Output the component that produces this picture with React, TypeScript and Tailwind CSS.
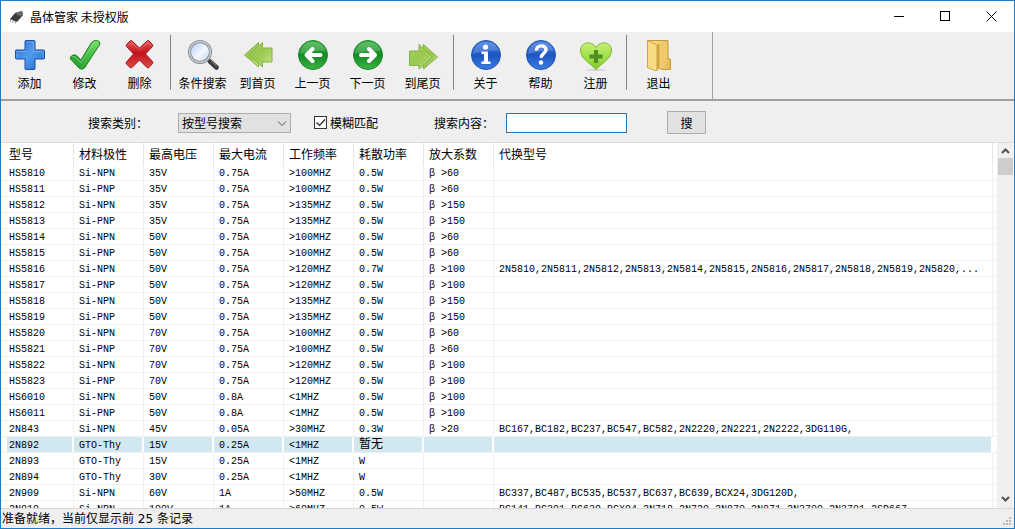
import { useState } from 'react'
import type { ReactNode } from 'react'
import clsx from 'clsx'

const columns = ['型号', '材料极性', '最高电压', '最大电流', '工作频率', '耗散功率', '放大系数', '代换型号']

const rows = [
  ['HS5810', 'Si-NPN', '35V', '0.75A', '>100MHZ', '0.5W', 'β >60', ''],
  ['HS5811', 'Si-PNP', '35V', '0.75A', '>100MHZ', '0.5W', 'β >60', ''],
  ['HS5812', 'Si-NPN', '35V', '0.75A', '>135MHZ', '0.5W', 'β >150', ''],
  ['HS5813', 'Si-PNP', '35V', '0.75A', '>135MHZ', '0.5W', 'β >150', ''],
  ['HS5814', 'Si-NPN', '50V', '0.75A', '>100MHZ', '0.5W', 'β >60', ''],
  ['HS5815', 'Si-PNP', '50V', '0.75A', '>100MHZ', '0.5W', 'β >60', ''],
  ['HS5816', 'Si-NPN', '50V', '0.75A', '>120MHZ', '0.7W', 'β >100', '2N5810,2N5811,2N5812,2N5813,2N5814,2N5815,2N5816,2N5817,2N5818,2N5819,2N5820,...'],
  ['HS5817', 'Si-PNP', '50V', '0.75A', '>120MHZ', '0.5W', 'β >100', ''],
  ['HS5818', 'Si-NPN', '50V', '0.75A', '>135MHZ', '0.5W', 'β >150', ''],
  ['HS5819', 'Si-PNP', '50V', '0.75A', '>135MHZ', '0.5W', 'β >150', ''],
  ['HS5820', 'Si-NPN', '70V', '0.75A', '>100MHZ', '0.5W', 'β >60', ''],
  ['HS5821', 'Si-PNP', '70V', '0.75A', '>100MHZ', '0.5W', 'β >60', ''],
  ['HS5822', 'Si-NPN', '70V', '0.75A', '>120MHZ', '0.5W', 'β >100', ''],
  ['HS5823', 'Si-PNP', '70V', '0.75A', '>120MHZ', '0.5W', 'β >100', ''],
  ['HS6010', 'Si-NPN', '50V', '0.8A', '<1MHZ', '0.5W', 'β >100', ''],
  ['HS6011', 'Si-PNP', '50V', '0.8A', '<1MHZ', '0.5W', 'β >100', ''],
  ['2N843', 'Si-NPN', '45V', '0.05A', '>30MHZ', '0.3W', 'β >20', 'BC167,BC182,BC237,BC547,BC582,2N2220,2N2221,2N2222,3DG110G,'],
  ['2N892', 'GTO-Thy', '15V', '0.25A', '<1MHZ', '暂无', '', ''],
  ['2N893', 'GTO-Thy', '15V', '0.25A', '<1MHZ', 'W', '', ''],
  ['2N894', 'GTO-Thy', '30V', '0.25A', '<1MHZ', 'W', '', ''],
  ['2N909', 'Si-NPN', '60V', '1A', '>50MHZ', '0.5W', '', 'BC337,BC487,BC535,BC537,BC637,BC639,BCX24,3DG120D,'],
  ['2N910', 'Si-NPN', '100V', '1A', '>60MHZ', '0.5W', '', 'BC141,BC301,BC639,BCX94,2N718,2N720,2N870,2N871,2N3700,2N3701,2SD667'],
]

function Icon({ children }: { children: ReactNode }) {
  return (
    <svg width="32" height="32" viewBox="0 0 32 32" aria-hidden="true">
      {children}
    </svg>
  )
}

const addIcon = (
  <Icon>
    <defs>
      <linearGradient id="addFill" x1="0" y1="0" x2="1" y2="1">
        <stop offset="0" stopColor="#2f6fd0" />
        <stop offset="0.5" stopColor="#4f9bee" />
        <stop offset="1" stopColor="#2163c9" />
      </linearGradient>
    </defs>
    <path d="M12 1.500h8q1 0 1 1V11h8.500q1 0 1 1v7q0 1-1 1H21v9.500q0 1-1 1h-8q-1 0-1-1V20H2.500q-1 0-1-1v-7q0-1 1-1H11V2.500q0-1 1-1z" fill="url(#addFill)" stroke="#1d4fa5" />
    <path d="M12.500 3h7v9.500h9.500v6" fill="none" stroke="#8fc0f7" opacity="0.5" />
    <path d="M3 18.500v-6h9.500" fill="none" stroke="#8fc0f7" opacity="0.5" />
  </Icon>
)

const editIcon = (
  <Icon>
    <defs>
      <linearGradient id="editFill" x1="1" y1="0" x2="0" y2="1">
        <stop offset="0" stopColor="#7ee06d" />
        <stop offset="0.5" stopColor="#3fb93f" />
        <stop offset="1" stopColor="#23962b" />
      </linearGradient>
    </defs>
    <path d="M27.500 1.500q3.500 0 3.500 3.500L15.500 29q-3 2.500-5.500 0L1.500 20q-.8-2 1.500-3.500 3-1.500 5 .5l4 4L22.500 3.500q2-2 5-2z" fill="url(#editFill)" stroke="#1b7d25" />
    <path d="M3 18q2.500-1 4 .5l5 5L25 3.800q1.500-1.300 4-.8" fill="none" stroke="#a9ee9a" opacity="0.5" />
  </Icon>
)

const deleteIcon = (
  <Icon>
    <defs>
      <linearGradient id="deleteFill" x1="0" y1="0" x2="0" y2="1">
        <stop offset="0" stopColor="#ea5f58" />
        <stop offset="0.45" stopColor="#c0121c" />
        <stop offset="1" stopColor="#dd4a48" />
      </linearGradient>
    </defs>
    <path d="M8 2l7.500 7L23 2q1-.8 2 0l3.500 3.500q.8 1 0 2L21.500 15l7 7.500q.8 1 0 2L25 28.500q-1 .8-2 0L15.500 21 8 28.500q-1 .8-2 0L2.500 25q-.8-1 0-2l7-8-7-7.500q-.8-1 0-2L6 2q1-.8 2 0z" fill="url(#deleteFill)" stroke="#a8141c" />
    <path d="M4 6.500L7 3.500l8.500 7.500L24 3.500l3 3" fill="none" stroke="#f9a6a0" opacity="0.35" />
  </Icon>
)

const searchIcon = (
  <Icon>
    <defs>
      <linearGradient id="lensFill" x1="0" y1="0" x2="1" y2="1">
        <stop offset="0" stopColor="#a9c6f3" />
        <stop offset="0.55" stopColor="#f4f8ff" />
        <stop offset="1" stopColor="#b7cff5" />
      </linearGradient>
    </defs>
    <path d="M20 20l2.500 2.500" stroke="#8b8b8b" strokeWidth="3" />
    <path d="M23 22.500l6.500 6" stroke="#3c3c3c" strokeWidth="4.500" strokeLinecap="round" />
    <path d="M23.500 21.500l6 5.500" stroke="#8d8d8d" strokeWidth="1" />
    <circle cx="13" cy="13" r="10.500" fill="url(#lensFill)" stroke="#7e8288" strokeWidth="3" />
    <circle cx="13" cy="13" r="10.500" fill="none" stroke="#c9ccd2" strokeWidth="1.500" />
  </Icon>
)

const arrowFill = (id: string) => (
  <defs>
    <linearGradient id={id} x1="0" y1="0" x2="1" y2="1">
      <stop offset="0" stopColor="#a3cc5e" />
      <stop offset="0.5" stopColor="#9aca50" />
      <stop offset="1" stopColor="#c5e48a" />
    </linearGradient>
  </defs>
)

const firstIcon = (
  <Icon>
    {arrowFill('firstFill')}
    <g fill="url(#firstFill)" stroke="#86b04a" strokeLinejoin="round">
      <path d="M16.500 3.500L2.500 16l14 12z" />
      <path d="M20.500 3.500V9h9.500v14h-9.500v5L7 16z" />
      <path d="M20 9L11 16l9 7" fill="none" opacity="0.4" />
    </g>
  </Icon>
)

const lastIcon = (
  <Icon>
    {arrowFill('lastFill')}
    <g fill="url(#lastFill)" stroke="#86b04a" strokeLinejoin="round">
      <path d="M16.500 5.500L30.500 18l-14 12z" />
      <path d="M12 5.500V12H2.500v14.500H12V30l13.500-12z" />
      <path d="M13 12l8 6-8 7" fill="none" opacity="0.4" />
    </g>
  </Icon>
)

function Ball({ id, light, mid, dark, children }: { id: string; light: string; mid: string; dark: string; children: ReactNode }) {
  return (
    <Icon>
      <defs>
        <linearGradient id={id} x1="0" y1="0" x2="0" y2="1">
          <stop offset="0" stopColor={light} />
          <stop offset="0.5" stopColor={mid} />
          <stop offset="1" stopColor={light} />
        </linearGradient>
      </defs>
      <circle cx="16" cy="16" r="14.500" fill={`url(#${id})`} stroke={dark} />
      <path d="M3 15C3.500 7 9 3 16 3s11.500 3 12.500 9C20 11 10 13 3 15z" fill="#fff" opacity="0.18" />
      {children}
    </Icon>
  )
}

const prevIcon = (
  <Ball id="prevFill" light="#3db445" mid="#138a24" dark="#1c8a2b">
    <path d="M23.500 16H10M15.500 10L9.500 16l6 6" fill="none" stroke="#fff" strokeWidth="4" strokeLinecap="round" strokeLinejoin="round" />
  </Ball>
)

const nextIcon = (
  <Ball id="nextFill" light="#3db445" mid="#138a24" dark="#1c8a2b">
    <path d="M9 16h13.500M17 10l6 6-6 6" fill="none" stroke="#fff" strokeWidth="4" strokeLinecap="round" strokeLinejoin="round" />
  </Ball>
)

const aboutIcon = (
  <Ball id="aboutFill" light="#3c7ce0" mid="#1d56c4" dark="#2455a8">
    <circle cx="15.500" cy="8" r="2.600" fill="#fff" />
    <path d="M11.500 12.500h6.500v10h2.500V25h-9v-2.500H14V15h-2.500z" fill="#fff" />
  </Ball>
)

const helpIcon = (
  <Ball id="helpFill" light="#3c7ce0" mid="#1d56c4" dark="#2455a8">
    <path d="M11.500 11.500c0-6 9.500-6 9.500-.8 0 3.800-4.800 3.600-4.800 8" fill="none" stroke="#fff" strokeWidth="3.400" />
    <circle cx="16" cy="23.500" r="2.200" fill="#fff" />
  </Ball>
)

const registerIcon = (
  <Icon>
    <defs>
      <linearGradient id="heartFill" x1="0" y1="0" x2="0" y2="1">
        <stop offset="0" stopColor="#c6ef74" />
        <stop offset="1" stopColor="#7fce23" />
      </linearGradient>
    </defs>
    <ellipse cx="16" cy="31" rx="10" ry="1" fill="#000" opacity="0.12" />
    <path d="M16 30.500C11 25 .5 19.500.5 11.500.5 2.500 12 1.500 16 8.500 20 1.500 31.500 2.500 31.500 11.500c0 8-10.500 13.500-15.500 19z" fill="url(#heartFill)" stroke="#79b52e" />
    <path d="M14 11h4v4.500h4.500v4H18V24h-4v-4.500H9.500v-4H14z" fill="#4f8f22" />
  </Icon>
)

const exitIcon = (
  <Icon>
    <defs>
      <linearGradient id="exitFill" x1="0" y1="0" x2="1" y2="0">
        <stop offset="0" stopColor="#fbe6a0" />
        <stop offset="1" stopColor="#e6bb50" />
      </linearGradient>
    </defs>
    <path d="M5 1.500h20V20h2.500v10.500H19L9 26z" fill="url(#exitFill)" stroke="#c39a3b" />
    <path d="M17 3.500h7v17l-5 3-2-1z" fill="#efcb6b" />
    <path d="M4.500 1.500L14 6v26.500l-9.500-4z" fill="#f8dc85" stroke="#c9a346" />
    <path d="M14 6l2.500-1.500V28L14 32z" fill="#d3a541" />
  </Icon>
)

const toolGroups = [
  [
    { label: '添加', icon: addIcon },
    { label: '修改', icon: editIcon },
    { label: '删除', icon: deleteIcon },
  ],
  [
    { label: '条件搜索', icon: searchIcon },
    { label: '到首页', icon: firstIcon },
    { label: '上一页', icon: prevIcon },
    { label: '下一页', icon: nextIcon },
    { label: '到尾页', icon: lastIcon },
  ],
  [
    { label: '关于', icon: aboutIcon },
    { label: '帮助', icon: helpIcon },
    { label: '注册', icon: registerIcon },
  ],
  [{ label: '退出', icon: exitIcon }],
]

function TitleBar() {
  return (
    <header className="flex h-[31px] shrink-0 items-center bg-white pl-2">
      <svg width="16" height="16" viewBox="0 0 16 16" aria-hidden="true">
        <path d="M1 10l5-6 7-2 1 4-6 7-3-1z" fill="#3d3d3d" />
        <path d="M6 4l7-2 1 4-4 1z" fill="#6b6b6b" />
        <path d="M2 10l-1 3M4.500 11l-1 3M7 12.500l-1 2" stroke="#9b9b9b" />
      </svg>
      <h1 className="ml-[5px] flex-1 text-xs">晶体管家 未授权版</h1>
      <button aria-label="最小化" className="flex h-full w-[46px] items-center justify-center">
        <svg width="11" height="11" viewBox="0 0 11 11"><path d="M0 5.500h10" stroke="#000" /></svg>
      </button>
      <button aria-label="最大化" className="flex h-full w-[46px] items-center justify-center">
        <svg width="11" height="11" viewBox="0 0 11 11"><rect x=".5" y=".5" width="9" height="9" fill="none" stroke="#000" /></svg>
      </button>
      <button aria-label="关闭" className="flex h-full w-[46px] items-center justify-center">
        <svg width="11" height="11" viewBox="0 0 11 11"><path d="M.5.5l10 10M10.500.5l-10 10" stroke="#000" /></svg>
      </button>
    </header>
  )
}

function Toolbar() {
  return (
    <div className="flex shrink-0 border-b-2 border-[#a0a0a0]">
      <div className="flex border-r border-[#a0a0a0] pt-[3px] pr-[26px] pb-2 pl-px">
        {toolGroups.map((group, i) => (
          <div key={i} className="flex">
            {i > 0 && <div className="mr-1 ml-[3px] h-[55px] w-px bg-[#868686]" />}
            {group.map((tool) => (
              <button key={tool.label} className="flex w-[55px] flex-col items-center pt-1">
                {tool.icon}
                <span className="mt-1 text-xs leading-4 whitespace-nowrap">{tool.label}</span>
              </button>
            ))}
          </div>
        ))}
      </div>
    </div>
  )
}

function SearchBar() {
  const [fuzzy, setFuzzy] = useState(true)
  const [keyword, setKeyword] = useState('')

  return (
    <form className="flex h-[42px] shrink-0 items-center border-b border-[#dcdcdc] pt-0.5 pl-[87px]" onSubmit={(e) => e.preventDefault()}>
      <label htmlFor="kind" className="w-[60px] whitespace-nowrap">搜索类别：</label>
      <div className="relative ml-[30px]">
        <select id="kind" className="block h-5 w-[113px] appearance-none border border-[#adadad] bg-[#e1e1e1] pl-[3px] text-xs leading-4">
          <option>按型号搜索</option>
        </select>
        <svg className="pointer-events-none absolute top-2 right-1" width="10" height="6" viewBox="0 0 10 6">
          <path d="M1 .5l4 4 4-4" fill="none" stroke="#555" />
        </svg>
      </div>
      <label className="ml-[23px] flex items-center gap-[3px] whitespace-nowrap">
        <span className="relative block h-[13px] w-[13px]">
          <input
            type="checkbox"
            checked={fuzzy}
            onChange={(e) => setFuzzy(e.target.checked)}
            className="block h-[13px] w-[13px] appearance-none border border-[#333] bg-white"
          />
          {fuzzy && (
            <svg className="pointer-events-none absolute inset-0" width="13" height="13" viewBox="0 0 13 13">
              <path d="M2.500 6.500l3 3 5.500-6" fill="none" stroke="#222" strokeWidth="1.200" />
            </svg>
          )}
        </span>
        模糊匹配
      </label>
      <label htmlFor="keyword" className="ml-14 w-[60px] whitespace-nowrap">搜索内容：</label>
      <input
        id="keyword"
        type="text"
        value={keyword}
        onChange={(e) => setKeyword(e.target.value)}
        className="ml-3 h-5 w-[121px] border border-[#2a78b5] bg-white px-1 outline-none"
      />
      <button type="submit" className="ml-10 h-[23px] w-[39px] border border-[#adadad] bg-[#e1e1e1]">搜</button>
    </form>
  )
}

function PartsTable() {
  const [selected, setSelected] = useState('2N892')

  return (
    <div className="flex min-h-0 flex-1 bg-white pl-px">
      <div className="min-w-0 flex-1 overflow-hidden">
        <table className="w-full table-fixed border-separate border-spacing-0">
          <colgroup>
            <col className="w-[72px]" />
            {columns.slice(1, 7).map((name) => (
              <col key={name} className="w-[70px]" />
            ))}
            <col />
            <col className="w-1" />
          </colgroup>
          <thead>
            <tr className="h-[22px]">
              {columns.map((name, i) => (
                <th key={name} className={clsx('border-r border-[#e5e5e5] p-0 text-left font-normal', i === 0 ? 'pl-[7px]' : 'pl-[5px]')}>
                  {name}
                </th>
              ))}
              <td />
            </tr>
          </thead>
          <tbody className="font-['Liberation_Mono','Noto_Sans_CJK_SC',monospace] text-[10px]">
            {rows.map((row) => (
              <tr key={row[0]} onClick={() => setSelected(row[0])}>
                {row.map((value, i) => (
                  <td key={i} className={clsx('border-r border-b p-0', row[0] === selected ? 'border-r-white border-b-[#f0f0f0]' : 'border-[#f0f0f0]')}>
                    <div
                      className={clsx(
                        'mr-px h-[15px] overflow-hidden whitespace-nowrap',
                        i === 0 ? 'ml-[5px] pl-[2px]' : 'pl-[5px]',
                        value === '暂无' ? 'text-xs leading-4' : 'leading-[17px]',
                        row[0] === selected && 'bg-[#d1e8f1]',
                      )}
                    >
                      {value}
                    </div>
                  </td>
                ))}
                <td className="border-b border-[#f0f0f0] p-0" />
              </tr>
            ))}
          </tbody>
        </table>
      </div>
      <div className="mr-px flex w-4 shrink-0 flex-col items-center bg-[#f0f0f0]">
        <button aria-label="向上滚动" className="flex h-[15px] w-full shrink-0 items-center justify-center">
          <svg width="9" height="6" viewBox="0 0 9 6"><path d="M1 5l3.500-3.500L8 5" fill="none" stroke="#505050" strokeWidth="2" /></svg>
        </button>
        <div className="h-[17px] w-[15px] bg-[#cdcdcd]" />
        <div className="flex-1" />
        <button aria-label="向下滚动" className="flex h-[19px] w-full shrink-0 items-center justify-center">
          <svg width="9" height="6" viewBox="0 0 9 6"><path d="M1 1l3.500 3.500L8 1" fill="none" stroke="#505050" strokeWidth="2" /></svg>
        </button>
      </div>
    </div>
  )
}

function StatusBar() {
  return (
    <footer className="flex h-5 shrink-0 items-center border-t border-[#d7d7d7] pl-px">
      <p className="flex-1 font-['DejaVu_Sans','Noto_Sans_CJK_SC',sans-serif]">准备就绪，当前仅显示前 25 条记录</p>
      <svg className="mr-[2px] self-end" width="10" height="11" viewBox="0 0 10 11" fill="#b8b8b8">
        <path d="M7 0h2v2H7zM4 3h2v2H4zM7 3h2v2H7zM1 6h2v2H1zM4 6h2v2H4zM7 6h2v2H7z" />
      </svg>
    </footer>
  )
}

export default function App() {
  return (
    <div className="flex h-screen flex-col overflow-hidden border border-[#1c7cc7] bg-[#efefef] font-['Noto_Sans_CJK_SC',sans-serif] text-xs text-black select-none">
      <TitleBar />
      <Toolbar />
      <SearchBar />
      <PartsTable />
      <StatusBar />
    </div>
  )
}
